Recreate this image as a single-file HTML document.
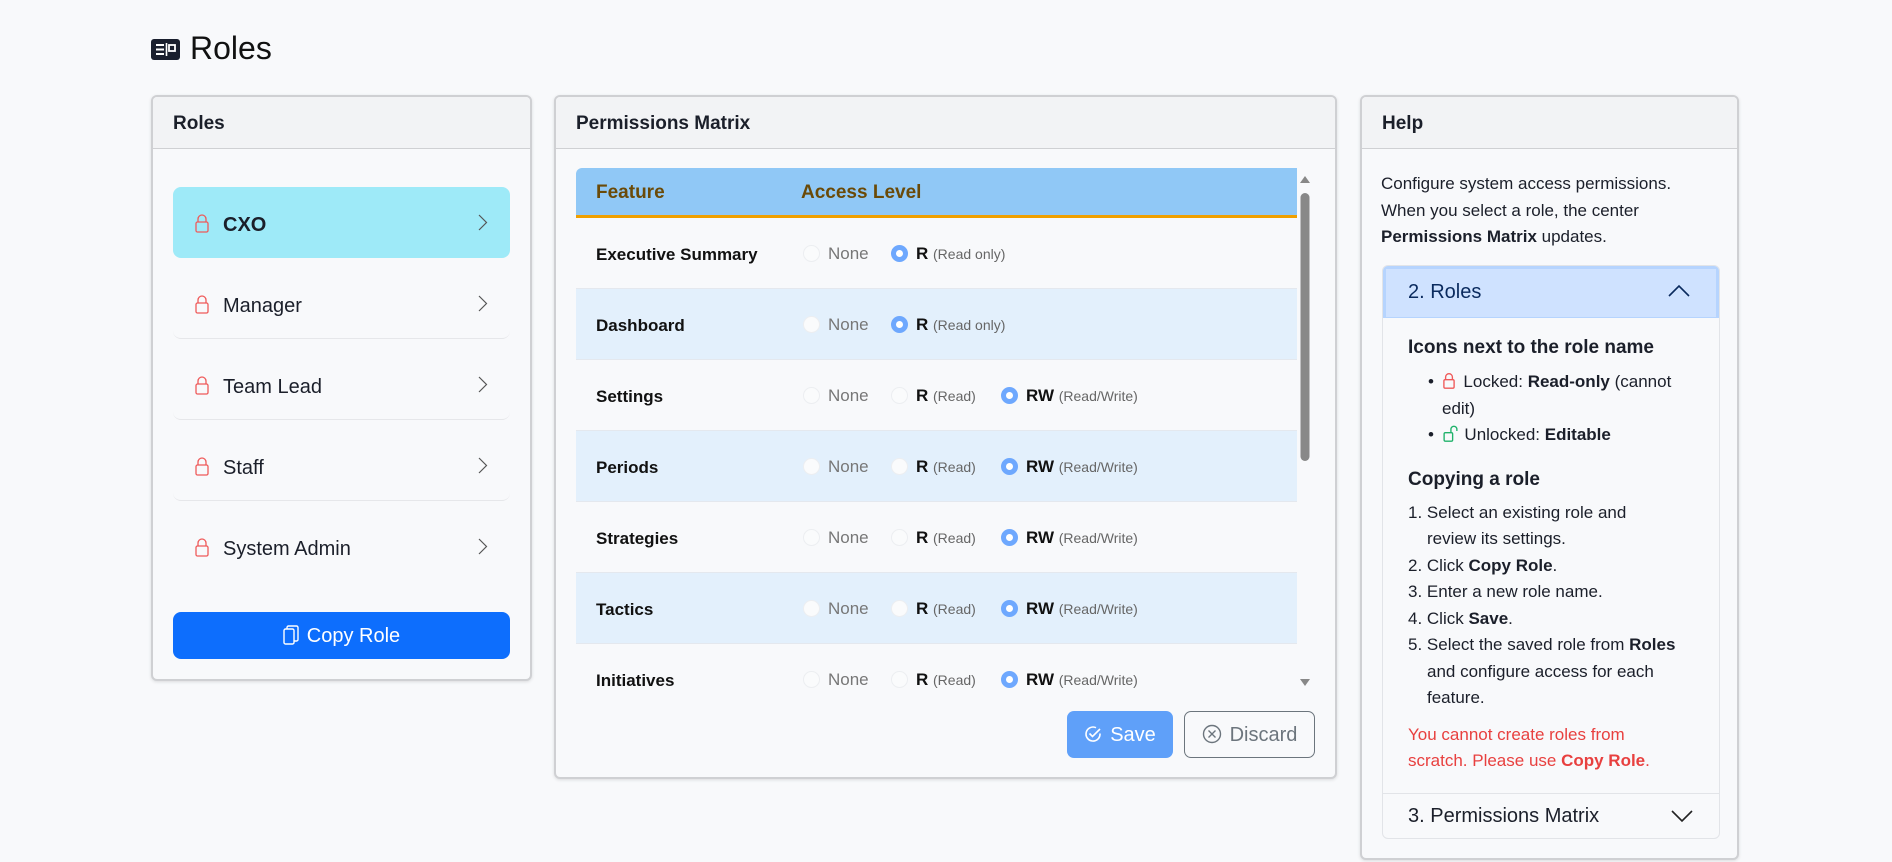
<!DOCTYPE html>
<html><head><meta charset="utf-8"><style>
*{box-sizing:border-box;margin:0;padding:0}
body{width:1892px;height:862px;background:#f8f9fb;font-family:"Liberation Sans",sans-serif;color:#1b1f2a;position:relative;overflow:hidden}
.card{position:absolute;background:#f8f9fb;border:2px solid #cfd0d3;border-radius:6px;box-shadow:0 1px 3px rgba(0,0,0,.12);overflow:hidden}
.hdr{height:52px;background:#f2f3f5;border-bottom:1px solid #cfd0d3;font-weight:bold;font-size:19px;line-height:54px;padding-left:20px}
.item{position:absolute;left:20px;width:337px;height:71px;border-radius:8px;font-size:20px;line-height:76px;padding-left:50px;border-bottom:1px solid #e6e7ea}
.item svg.lk{position:absolute;left:22px;top:26px}
.item .ch{position:absolute;right:22px;top:27px}
.row{position:absolute;left:0;width:721px;height:71px;border-bottom:1px solid #e4e8ee}
.row .f{position:absolute;left:20px;top:0;line-height:73px;font-weight:bold;font-size:17px;color:#111}
.rd{position:absolute;top:27px;width:17px;height:17px;border-radius:50%;border:1px solid #eceef1;background:#fafbfc}
.rd.on{border:5px solid #6ea8fe;background:#fff}
.lb{position:absolute;top:0;line-height:71px;font-size:17px;color:#777}
.lb b{color:#111}
.lb small{font-size:14px;color:#666}
.help{font-size:17px;line-height:26.5px}
</style></head><body>
<svg style="position:absolute;left:151px;top:39px" width="29" height="21" viewBox="0 0 29 21"><rect width="29" height="21" rx="3" fill="#1a1f2e"/><path d="M5 6h8M5 10.5h8M5 15h8" stroke="#fff" stroke-width="2"/><path d="M15.5 4v13" stroke="#fff" stroke-width="1.6"/><rect x="18" y="6" width="6" height="6" fill="none" stroke="#fff" stroke-width="1.8"/></svg>
<div style="position:absolute;left:190px;top:30px;font-size:32px;color:#111">Roles</div>

<!-- Left card -->
<div class="card" style="left:151px;top:95px;width:381px;height:586px">
<div class="hdr">Roles</div>
<div class="item" style="top:90px;background:#9eeaf8;border:none;font-weight:bold">
<svg class="lk" width="14" height="20" viewBox="0 0 14 20"><path d="M3 9V6a4 4 0 0 1 8 0v3" fill="none" stroke="#ef5a5a" stroke-width="1.3"/><rect x="1" y="9" width="12" height="10" rx="1.5" fill="none" stroke="#ef5a5a" stroke-width="1.3"/></svg>CXO<svg class="ch" width="10" height="17" viewBox="0 0 10 17"><path d="M1 1l7.5 7.5L1 16" fill="none" stroke="#555" stroke-width="1.2"/></svg></div>
<div class="item" style="top:171px"><svg class="lk" width="14" height="20" viewBox="0 0 14 20"><path d="M3 9V6a4 4 0 0 1 8 0v3" fill="none" stroke="#ef5a5a" stroke-width="1.3"/><rect x="1" y="9" width="12" height="10" rx="1.5" fill="none" stroke="#ef5a5a" stroke-width="1.3"/></svg>Manager<svg class="ch" width="10" height="17" viewBox="0 0 10 17"><path d="M1 1l7.5 7.5L1 16" fill="none" stroke="#555" stroke-width="1.2"/></svg></div>
<div class="item" style="top:252px"><svg class="lk" width="14" height="20" viewBox="0 0 14 20"><path d="M3 9V6a4 4 0 0 1 8 0v3" fill="none" stroke="#ef5a5a" stroke-width="1.3"/><rect x="1" y="9" width="12" height="10" rx="1.5" fill="none" stroke="#ef5a5a" stroke-width="1.3"/></svg>Team Lead<svg class="ch" width="10" height="17" viewBox="0 0 10 17"><path d="M1 1l7.5 7.5L1 16" fill="none" stroke="#555" stroke-width="1.2"/></svg></div>
<div class="item" style="top:333px"><svg class="lk" width="14" height="20" viewBox="0 0 14 20"><path d="M3 9V6a4 4 0 0 1 8 0v3" fill="none" stroke="#ef5a5a" stroke-width="1.3"/><rect x="1" y="9" width="12" height="10" rx="1.5" fill="none" stroke="#ef5a5a" stroke-width="1.3"/></svg>Staff<svg class="ch" width="10" height="17" viewBox="0 0 10 17"><path d="M1 1l7.5 7.5L1 16" fill="none" stroke="#555" stroke-width="1.2"/></svg></div>
<div class="item" style="top:414px;border:none"><svg class="lk" width="14" height="20" viewBox="0 0 14 20"><path d="M3 9V6a4 4 0 0 1 8 0v3" fill="none" stroke="#ef5a5a" stroke-width="1.3"/><rect x="1" y="9" width="12" height="10" rx="1.5" fill="none" stroke="#ef5a5a" stroke-width="1.3"/></svg>System Admin<svg class="ch" width="10" height="17" viewBox="0 0 10 17"><path d="M1 1l7.5 7.5L1 16" fill="none" stroke="#555" stroke-width="1.2"/></svg></div>
<div style="position:absolute;left:20px;top:515px;width:337px;height:47px;background:#0d6efd;border-radius:8px;color:#fff;font-size:20px;line-height:49px;text-align:center"><svg width="16" height="20" viewBox="0 0 16 20" style="vertical-align:-3px;margin-right:8px"><rect x="1" y="4" width="10" height="15" rx="1.5" fill="none" stroke="#fff" stroke-width="1.4"/><path d="M4 4V2.5A1.5 1.5 0 0 1 5.5 1h8A1.5 1.5 0 0 1 15 2.5v12a1.5 1.5 0 0 1-1.5 1.5H11" fill="none" stroke="#fff" stroke-width="1.4"/></svg>Copy Role</div>
</div>

<!-- Middle card -->
<div class="card" style="left:554px;top:95px;width:783px;height:684px">
<div class="hdr">Permissions Matrix</div>
<div style="position:absolute;left:20px;top:71px;width:721px;height:527px;overflow:hidden">
<div style="position:absolute;left:0;top:0;width:721px;height:50px;background:#90c8f6;border-bottom:3px solid #f0a000;border-radius:6px 0 0 0;color:#6a4a08;font-size:19px;font-weight:bold;line-height:50px"><span style="position:absolute;left:20px">Feature</span><span style="position:absolute;left:225px">Access Level</span></div>
<div class="row" style="top:50px"><span class="f">Executive Summary</span><span class="rd" style="left:227px"></span><span class="lb" style="left:252px">None</span><span class="rd on" style="left:315px"></span><span class="lb" style="left:340px"><b>R</b> <small>(Read only)</small></span></div>
<div class="row" style="top:121px;background:#e3f0fc"><span class="f">Dashboard</span><span class="rd" style="left:227px"></span><span class="lb" style="left:252px">None</span><span class="rd on" style="left:315px"></span><span class="lb" style="left:340px"><b>R</b> <small>(Read only)</small></span></div>
<div class="row" style="top:192px"><span class="f">Settings</span><span class="rd" style="left:227px"></span><span class="lb" style="left:252px">None</span><span class="rd" style="left:315px"></span><span class="lb" style="left:340px"><b>R</b> <small>(Read)</small></span><span class="rd on" style="left:425px"></span><span class="lb" style="left:450px"><b>RW</b> <small>(Read/Write)</small></span></div>
<div class="row" style="top:263px;background:#e3f0fc"><span class="f">Periods</span><span class="rd" style="left:227px"></span><span class="lb" style="left:252px">None</span><span class="rd" style="left:315px"></span><span class="lb" style="left:340px"><b>R</b> <small>(Read)</small></span><span class="rd on" style="left:425px"></span><span class="lb" style="left:450px"><b>RW</b> <small>(Read/Write)</small></span></div>
<div class="row" style="top:334px"><span class="f">Strategies</span><span class="rd" style="left:227px"></span><span class="lb" style="left:252px">None</span><span class="rd" style="left:315px"></span><span class="lb" style="left:340px"><b>R</b> <small>(Read)</small></span><span class="rd on" style="left:425px"></span><span class="lb" style="left:450px"><b>RW</b> <small>(Read/Write)</small></span></div>
<div class="row" style="top:405px;background:#e3f0fc"><span class="f">Tactics</span><span class="rd" style="left:227px"></span><span class="lb" style="left:252px">None</span><span class="rd" style="left:315px"></span><span class="lb" style="left:340px"><b>R</b> <small>(Read)</small></span><span class="rd on" style="left:425px"></span><span class="lb" style="left:450px"><b>RW</b> <small>(Read/Write)</small></span></div>
<div class="row" style="top:476px"><span class="f">Initiatives</span><span class="rd" style="left:227px"></span><span class="lb" style="left:252px">None</span><span class="rd" style="left:315px"></span><span class="lb" style="left:340px"><b>R</b> <small>(Read)</small></span><span class="rd on" style="left:425px"></span><span class="lb" style="left:450px"><b>RW</b> <small>(Read/Write)</small></span></div>
</div>
<svg style="position:absolute;left:742px;top:76px" width="14" height="520"><path d="M2 10l5-7 5 7z" fill="#888"/><rect x="2.5" y="20" width="9" height="268" rx="4.5" fill="#888"/><path d="M2 506l5 7 5-7z" fill="#888"/></svg>
<div style="position:absolute;left:511px;top:614px;width:106px;height:47px;background:#5fa0f9;border-radius:7px;color:#fff;font-size:20px;line-height:49px;text-align:center"><svg width="18" height="18" viewBox="0 0 18 18" style="vertical-align:-2px;margin-right:8px"><path d="M16 8.5A7 7 0 1 1 12 2.7" fill="none" stroke="#fff" stroke-width="1.6"/><path d="M5.5 8.5l3 3L16 4" fill="none" stroke="#fff" stroke-width="1.6"/></svg>Save</div>
<div style="position:absolute;left:628px;top:614px;width:131px;height:47px;border:1px solid #6c757d;border-radius:7px;color:#6c757d;font-size:20px;line-height:47px;text-align:center"><svg width="20" height="20" viewBox="0 0 20 20" style="vertical-align:-3px;margin-right:8px"><circle cx="10" cy="10" r="8.5" fill="none" stroke="#6c757d" stroke-width="1.4"/><path d="M6.5 6.5l7 7M13.5 6.5l-7 7" stroke="#6c757d" stroke-width="1.4"/></svg>Discard</div>
</div>

<!-- Right card -->
<div class="card" style="left:1360px;top:95px;width:379px;height:765px">
<div class="hdr">Help</div>
<div class="help" style="position:absolute;left:19px;top:74px;white-space:nowrap">Configure system access permissions.<br>When you select a role, the center<br><b>Permissions Matrix</b> updates.</div>
<div style="position:absolute;left:20px;top:168px;width:338px;height:574px;border:1px solid #e2e4e8;border-radius:6px;overflow:hidden">
<div style="height:52px;background:#cfe2ff;border:3px solid #b6d4fe;border-bottom:1px solid #b6d4fe;color:#0a2a5e;font-size:20px;line-height:46px;padding-left:22px;position:relative">2. Roles<svg style="position:absolute;right:26px;top:15px" width="22" height="13" viewBox="0 0 22 13"><path d="M1 12L11 2l10 10" fill="none" stroke="#0a2a5e" stroke-width="1.6"/></svg></div>
<div style="position:absolute;left:25px;top:68px;white-space:nowrap" class="help">
<div style="font-weight:bold;font-size:19px;line-height:28px">Icons next to the role name</div>
<div style="margin-top:7px;position:relative;padding-left:20px">• <svg width="12" height="17" viewBox="0 0 14 20" style="vertical-align:-2px;margin:0 4px"><path d="M3 9V6a4 4 0 0 1 8 0v3" fill="none" stroke="#ef5a5a" stroke-width="1.6"/><rect x="1" y="9" width="12" height="10" rx="1.5" fill="none" stroke="#ef5a5a" stroke-width="1.6"/></svg> Locked: <b>Read-only</b> (cannot<br><span style="padding-left:14px">edit)</span><br>• <svg width="15" height="17" viewBox="0 0 17 20" style="vertical-align:-2px;margin:0 2px 0 4px"><path d="M9 9V5a3.5 3.5 0 0 1 7 0v2" fill="none" stroke="#20b26b" stroke-width="1.6"/><rect x="1" y="9" width="10" height="10" rx="1.5" fill="none" stroke="#20b26b" stroke-width="1.6"/></svg> Unlocked: <b>Editable</b></div>
<div style="font-weight:bold;font-size:19px;line-height:28px;margin-top:17px">Copying a role</div>
<div style="margin-top:6px">1. Select an existing role and<br><span style="padding-left:19px">review its settings.</span><br>2. Click <b>Copy Role</b>.<br>3. Enter a new role name.<br>4. Click <b>Save</b>.<br>5. Select the saved role from <b>Roles</b><br><span style="padding-left:19px">and configure access for each</span><br><span style="padding-left:19px">feature.</span></div>
<div style="color:#e8403f;margin-top:10px">You cannot create roles from<br>scratch. Please use <b>Copy Role</b>.</div>
</div>
<div style="position:absolute;left:0;top:527px;width:100%;height:46px;border-top:1px solid #e2e4e8;font-size:20px;line-height:44px;padding-left:25px">3. Permissions Matrix<svg style="position:absolute;right:26px;top:16px" width="22" height="13" viewBox="0 0 22 13"><path d="M1 1l10 10L21 1" fill="none" stroke="#222" stroke-width="1.6"/></svg></div>
</div>
</div>
</body></html>
